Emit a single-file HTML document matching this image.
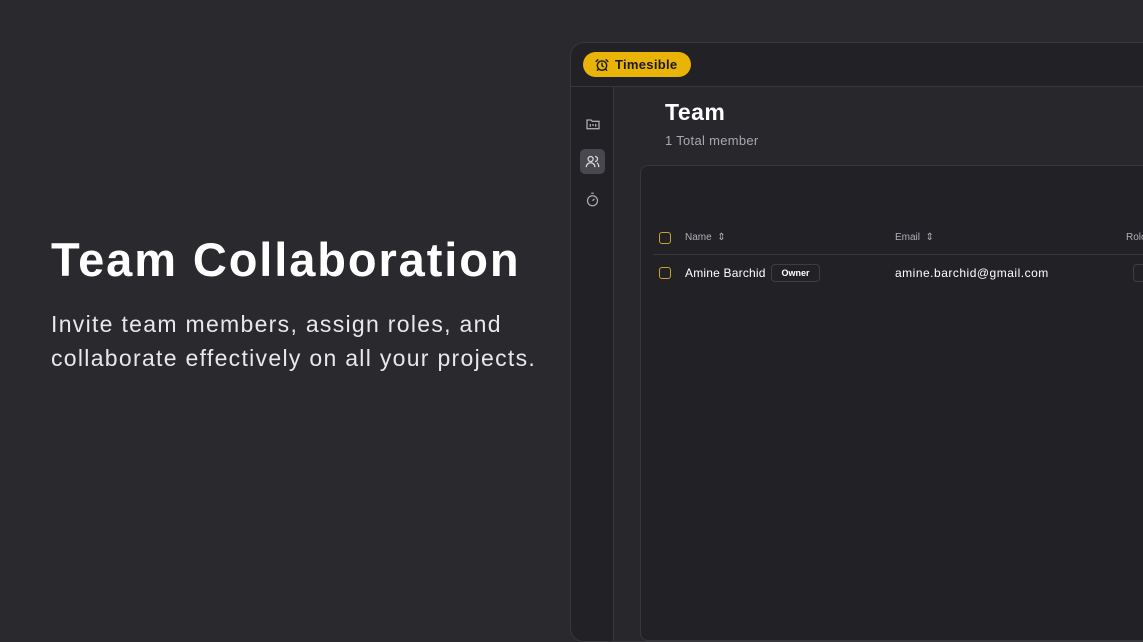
<!DOCTYPE html>
<html><head><style>
*{margin:0;padding:0;box-sizing:border-box}
body{width:1143px;height:600px;overflow:hidden;background:#2a292e;font-family:"Liberation Sans",sans-serif;position:relative;color:#fff}
.h1{position:absolute;left:51px;top:232px;font-size:47px;font-weight:bold;letter-spacing:1.9px}
.p{position:absolute;left:51px;top:307px;font-size:23px;line-height:34px;color:#e8e8ea;letter-spacing:1.3px}
.win{position:absolute;left:570px;top:42px;width:600px;height:600px;background:#222126;border:1px solid #38373c;border-radius:14px}
.top{position:absolute;left:0;top:0;right:0;height:44px;border-bottom:1px solid #38373c}
.badge{position:absolute;left:12px;top:9px;width:108px;height:25px;background:#eab308;border-radius:13px;color:#1a1a1a;font-weight:bold;font-size:13px;line-height:25px;padding-left:32px;letter-spacing:.3px}
.side{position:absolute;left:0;top:44px;width:43px;bottom:0;border-right:1px solid #38373c}
.main{position:absolute;left:43px;top:44px;right:0;bottom:0;background:#28272c}
.card{position:absolute;left:26px;top:78px;right:0;bottom:0;background:#222126;border:1px solid #38373c;border-radius:8px}
.t{position:absolute;font-size:12px}
.cb{position:absolute;width:12px;height:12px;border:1.5px solid #c8a22c;border-radius:3px}
</style></head><body>
<div class="h1">Team Collaboration</div>
<div class="p">Invite team members, assign roles, and<br>collaborate effectively on all your projects.</div>
<div class="win">
 <div class="top"><div class="badge">
  <svg style="position:absolute;left:12px;top:6px" width="14" height="14" viewBox="0 0 24 24" fill="none" stroke="#1a1a1a" stroke-width="2.4" stroke-linecap="round"><circle cx="12" cy="13" r="8"/><path d="M12 9v4l2 2M5 3L2 6M22 6l-3-3M6 19l-2 2M18 19l2 2"/></svg>Timesible</div></div>
 <div class="side">
  <svg style="position:absolute;left:14px;top:29px" width="16" height="16" viewBox="0 0 24 24" fill="none" stroke="#aaa" stroke-width="2"><path d="M3 6h6l2 2h10v11H3z"/><path d="M8 12v4M12 12v3M16 12v4"/></svg>
  <div style="position:absolute;left:9px;top:62px;width:25px;height:25px;background:#49484e;border-radius:5px"></div>
  <svg style="position:absolute;left:14px;top:67px" width="15" height="15" viewBox="0 0 24 24" fill="none" stroke="#ddd" stroke-width="2"><circle cx="9" cy="8" r="4"/><path d="M2 21c0-4 3-7 7-7s7 3 7 7M16 4a4 4 0 010 8M19 14c2 1 3 4 3 7"/></svg>
  <svg style="position:absolute;left:14px;top:105px" width="15" height="15" viewBox="0 0 24 24" fill="none" stroke="#aaa" stroke-width="2"><circle cx="12" cy="14" r="8"/><path d="M10 2h4M12 14l3-3"/></svg>
 </div>
 <div class="main">
  <div style="position:absolute;left:51px;top:12px;font-size:23px;font-weight:bold;letter-spacing:.5px">Team</div>
  <div style="position:absolute;left:51px;top:46px;font-size:13px;color:#a9a8b0;letter-spacing:.3px">1 Total member</div>
  <div class="card">
   <div class="cb" style="left:18px;top:66px"></div>
   <div class="t" style="left:44px;top:66px;font-size:10px;color:#b0afb6">Name &nbsp;⇕</div>
   <div class="t" style="left:254px;top:66px;font-size:10px;color:#b0afb6">Email &nbsp;⇕</div>
   <div class="t" style="left:485px;top:66px;font-size:10px;color:#b0afb6">Role</div>
   <div style="position:absolute;left:12px;right:0;top:88px;border-top:1px solid #38373c"></div>
   <div class="cb" style="left:18px;top:101px"></div>
   <div class="t" style="left:44px;top:100px;font-size:12px;letter-spacing:.2px">Amine Barchid</div>
   <div style="position:absolute;left:130px;top:98px;width:49px;height:18px;border:1px solid #3e3d42;border-radius:4px;font-size:9px;font-weight:bold;text-align:center;line-height:16px">Owner</div>
   <div class="t" style="left:254px;top:100px;letter-spacing:.5px">amine.barchid@gmail.com</div>
   <div style="position:absolute;left:492px;top:98px;width:20px;height:18px;border:1px solid #3e3d42;border-radius:4px"></div>
  </div>
 </div>
</div>
</body></html>
